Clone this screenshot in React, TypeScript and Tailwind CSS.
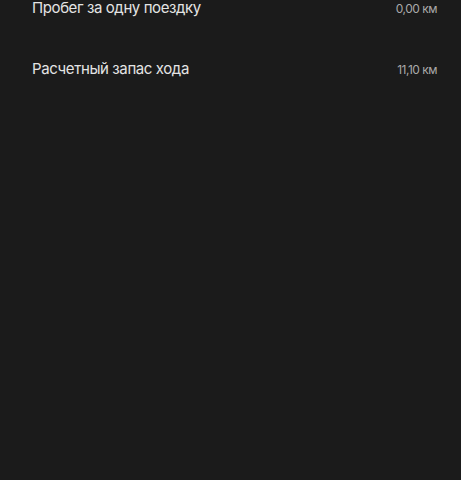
const rows = [
  { label: 'Пробег за одну поездку', value: '0,00 км' },
  { label: 'Расчетный запас хода', value: '11,10 км' },
]

const App = () => {
  return (
    <div className="min-h-[480px] w-full overflow-hidden bg-[#1b1b1b] font-['Inter','Liberation_Sans',sans-serif]">
      <div className="-mt-[22px] flex flex-col">
        {rows.map((row) => (
          <div key={row.label} className="flex h-[61px] items-center justify-between pl-8 pr-6">
            <p className="text-[15px] tracking-[-0.4px] text-[#e4e4e4]">{row.label}</p>
            <p className="text-[12px] tracking-[-0.5px] text-[#a9a9a9]">{row.value}</p>
          </div>
        ))}
      </div>
    </div>
  )
}

export default App
